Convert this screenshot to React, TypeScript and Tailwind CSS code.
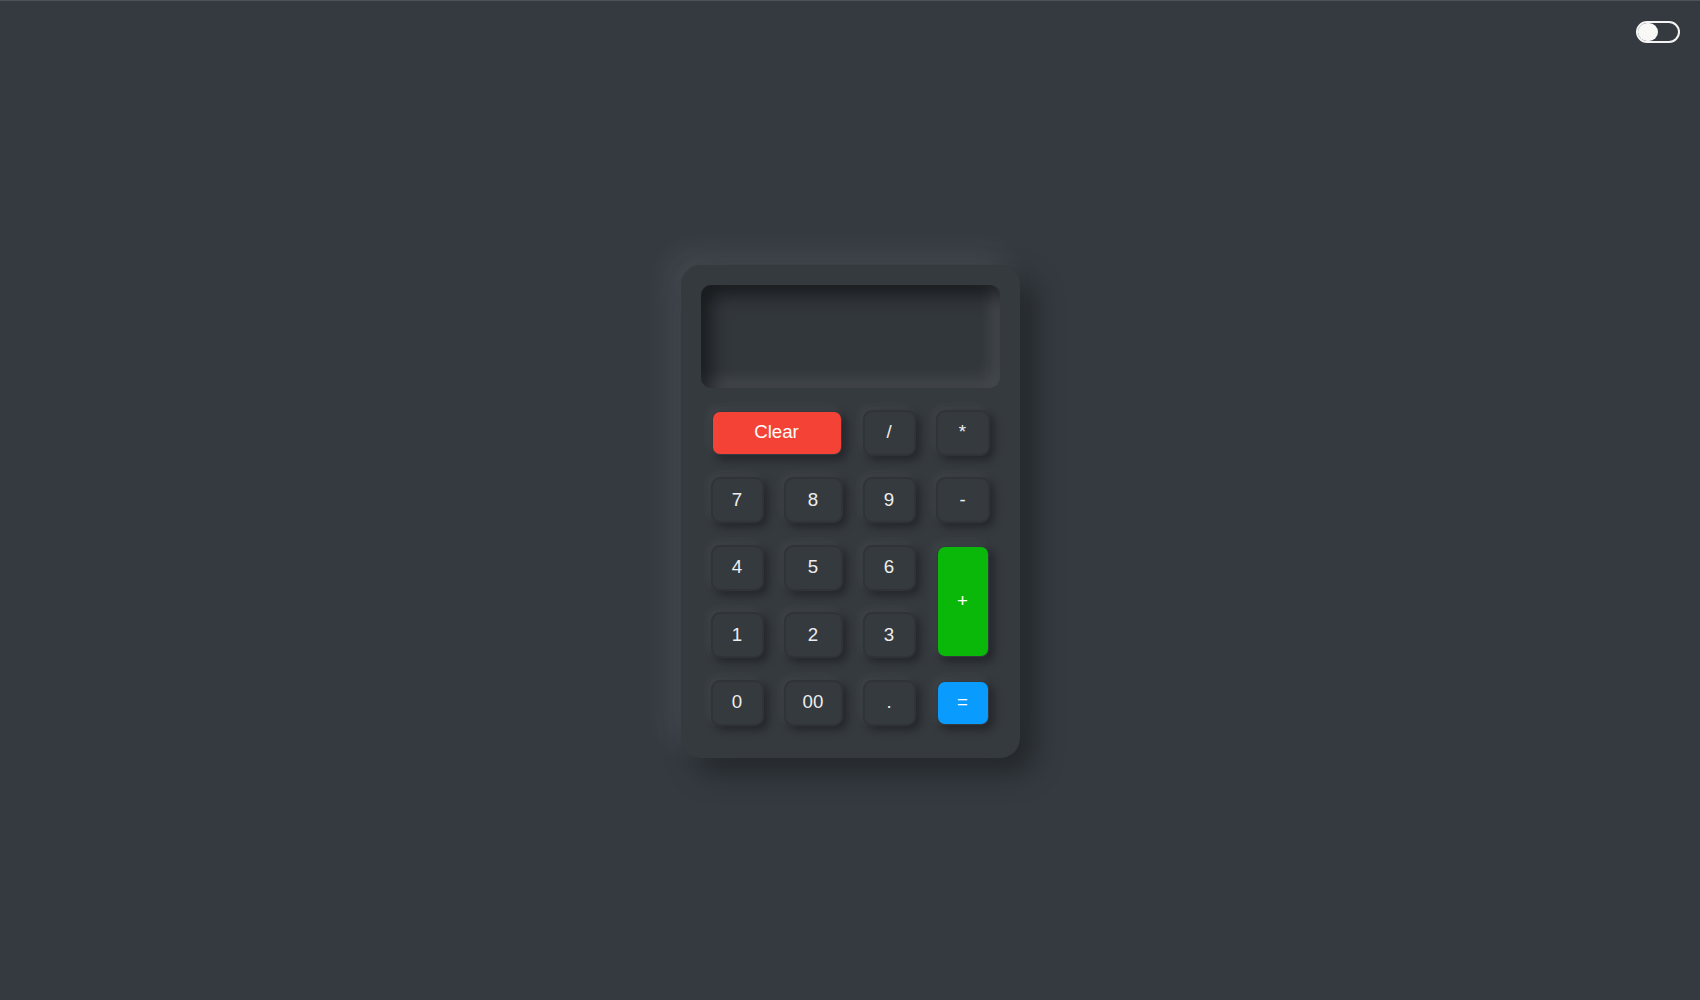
import { useState } from "react";

type Key = {
  label: string;
  kind?: "clear" | "plus" | "equals";
  span?: string;
};

const keys: Key[] = [
  { label: "Clear", kind: "clear", span: "col-span-2" },
  { label: "/" },
  { label: "*" },
  { label: "7" },
  { label: "8" },
  { label: "9" },
  { label: "-" },
  { label: "4" },
  { label: "5" },
  { label: "6" },
  { label: "+", kind: "plus", span: "row-span-2" },
  { label: "1" },
  { label: "2" },
  { label: "3" },
  { label: "0" },
  { label: "00" },
  { label: "." },
  { label: "=", kind: "equals" },
];

const kindStyles: Record<string, string> = {
  clear: "bg-[#f44336] text-white border-transparent bg-clip-padding",
  plus: "bg-[#0ab80a] text-white border-transparent bg-clip-padding text-[17px]",
  equals: "bg-[#0a9bff] text-white border-transparent bg-clip-padding text-[17px]",
};

export default function App() {
  const [display, setDisplay] = useState("");
  const [dark, setDark] = useState(false);

  const press = (k: string) => {
    if (k === "Clear") return setDisplay("");
    if (k === "=") {
      try {
        // eslint-disable-next-line no-new-func
        setDisplay(String(Function(`return (${display || 0})`)()));
      } catch {
        setDisplay("Error");
      }
      return;
    }
    setDisplay((d) => d + k);
  };

  return (
    <div className="relative min-h-screen bg-[#343a40] border-t border-[#4d5359] flex items-center justify-center font-['Liberation_Sans',Arial,sans-serif]">
      {/* Theme toggle */}
      <button
        onClick={() => setDark((v) => !v)}
        className="absolute top-[20px] right-[20px] h-[22px] w-[44px] rounded-full border-2 border-[#f4f4f4] p-0"
      >
        <span
          className={`block h-[18px] w-[20px] rounded-full bg-[#f8f8f6] ${dark ? "translate-x-[20px]" : ""}`}
        />
      </button>

      {/* Calculator */}
      <div className="mt-[21px] w-[339px] rounded-[20px] bg-[#353a3f] px-5 pt-5 pb-[32px] shadow-[-12px_-12px_30px_rgba(255,255,255,0.08),14px_14px_30px_rgba(0,0,0,0.35)]">
        <div className="h-[103px] rounded-[10px] bg-[#32373c] shadow-[inset_10px_10px_18px_rgba(0,0,0,0.5),inset_-8px_-8px_16px_rgba(255,255,255,0.1)] flex items-end justify-end px-4 pb-3 text-[30px] text-[#eaeaea] overflow-hidden">
          {display}
        </div>

        <div className="mt-[22px] grid grid-cols-[53px_59px_53px_54px] auto-rows-[46px] gap-x-5 gap-y-[21.5px] justify-center">
          {keys.map((k) => (
            <button
              key={k.label}
              onClick={() => press(k.label)}
              className={`${k.span ?? ""} flex items-center justify-center rounded-[9px] border-2 text-[18.7px] ${
                k.kind
                  ? kindStyles[k.kind]
                  : "bg-[#353a3f] border-[#303438] text-[#eeeeee]"
              } shadow-[4px_4px_9px_rgba(0,0,0,0.35),-3px_-3px_8px_rgba(255,255,255,0.06)]`}
            >
              {k.label}
            </button>
          ))}
        </div>
      </div>
    </div>
  );
}
